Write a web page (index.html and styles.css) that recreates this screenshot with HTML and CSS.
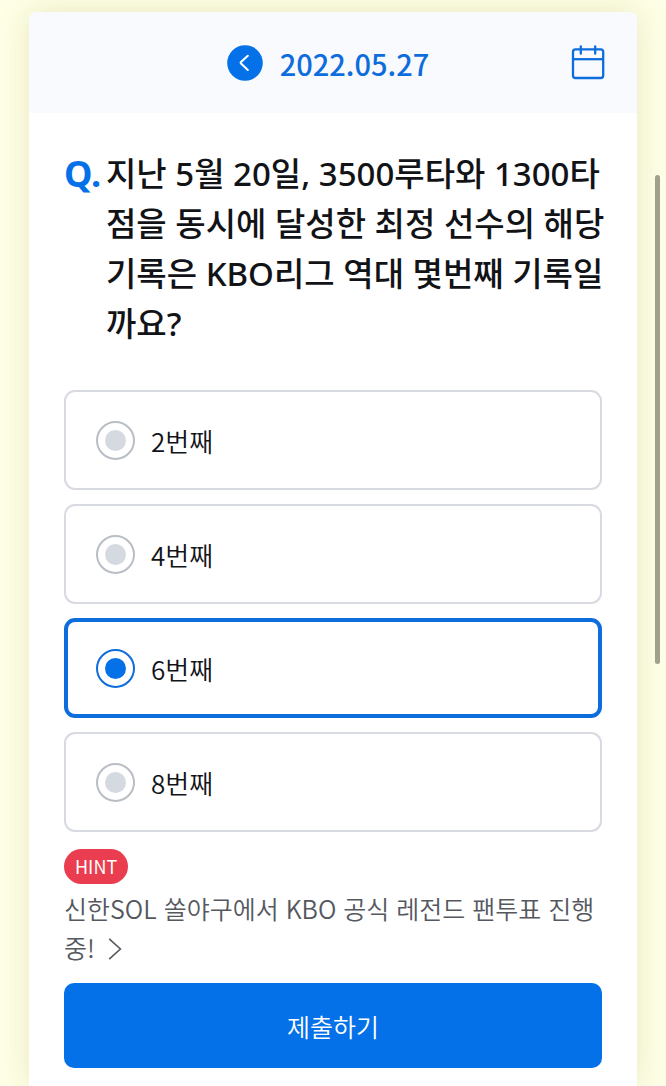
FILE: index.html
```
<!DOCTYPE html>
<html lang="ko">
<head>
<meta charset="utf-8">
<meta name="viewport" content="width=device-width, initial-scale=1">
<title>2022.05.27</title>
<link rel="stylesheet" href="styles.css">
</head>
<body>
<main class="card">
  <header class="card-header">
    <button class="icon-button prev" type="button" aria-label="이전">
      <svg width="36" height="36" viewBox="0 0 36 36" fill="none"><circle cx="18" cy="18" r="17.8" fill="#0471e9"/><path d="M20.8 10.8L14 17Q13.2 17.8 14 18.6L20.8 25" stroke="#fff" stroke-width="2.1" stroke-linecap="round"/></svg>
    </button>
    <h1 class="date">2022.05.27</h1>
    <button class="icon-button calendar" type="button" aria-label="달력">
      <svg width="34" height="36" viewBox="0 0 34 36" fill="none" stroke="#0e6ddd" stroke-width="2.3"><rect x="2" y="4.4" width="30.2" height="28.6" rx="2.5"/><path d="M2 14.2H32.2"/><path d="M9.8 1.5V8.7M24.2 1.5V8.7" stroke-linecap="round"/></svg>
    </button>
  </header>
  <form class="quiz">
    <fieldset class="choices" aria-labelledby="question">
      <h2 class="question"><span class="mark">Q.</span><span id="question">지난 5월 20일, 3500루타와 1300타<br>점을 동시에 달성한 최정 선수의 해당<br>기록은 KBO리그 역대 몇번째 기록일<br>까요?</span></h2>
      <label class="option"><input class="radio" type="radio" name="answer" value="2">2번째</label>
      <label class="option"><input class="radio" type="radio" name="answer" value="4">4번째</label>
      <label class="option"><input class="radio" type="radio" name="answer" value="6" checked>6번째</label>
      <label class="option"><input class="radio" type="radio" name="answer" value="8">8번째</label>
    </fieldset>
    <span class="badge">HINT</span>
    <a class="hint" href="#">신한SOL 쏠야구에서 KBO 공식 레전드 팬투표 진행<br>중!<svg class="chevron" width="14" height="24" viewBox="0 0 14 24" fill="none" stroke="#55585f" stroke-width="1.6"><path d="M1.2 1.8L12.4 12L1.2 22.2"/></svg></a>
    <button class="submit" type="submit">제출하기</button>
  </form>
</main>
<div class="scroll-thumb"></div>
</body>
</html>
```

FILE: styles.css
```
* { box-sizing: border-box; }
body {
  margin: 0;
  padding: 12px 29px 0;
  min-height: 100vh;
  display: flex;
  background: #feffe6;
  color: #111317;
  font-family: "Noto Sans CJK KR", "Noto Sans", sans-serif;
}
.card {
  flex: 1;
  min-width: 0;
  background: #fff;
  border-radius: 8px 8px 0 0;
  box-shadow: 0 0 32px rgba(140, 120, 30, 0.18);
}
.card-header {
  display: grid;
  grid-template-columns: 1fr auto auto 1fr;
  align-items: center;
  column-gap: 17px;
  padding: 0 32px 0 22px;
  height: 101px;
  background: #f9fafe;
  border-radius: 8px 8px 0 0;
}
.icon-button {
  display: flex;
  padding: 0;
  border: 0;
  background: none;
}
.prev { grid-column: 2; }
.calendar { justify-self: end; }
.date {
  margin: 0;
  font-size: 29px;
  font-weight: 500;
  line-height: 40px;
  color: #0e6ddd;
}
.quiz {
  display: flex;
  flex-direction: column;
  padding: 36px 35px 18px;
}
.choices {
  display: flex;
  flex-direction: column;
  gap: 14px;
  min-width: 0;
  margin: 0;
  padding: 0;
  border: 0;
}
.question {
  display: grid;
  grid-template-columns: 36px 1fr;
  column-gap: 6px;
  margin: 0 0 27px;
  font-family: "Noto Sans", "Noto Sans CJK KR", sans-serif;
  font-size: 33px;
  font-weight: 500;
  line-height: 50px;
  white-space: nowrap;
}
.mark {
  font-size: 36px;
  font-weight: 700;
  color: #0471e9;
}
.option {
  display: flex;
  align-items: center;
  gap: 16px;
  height: 100px;
  padding: 0 30px;
  border: 2px solid #d8dae1;
  border-radius: 11px;
  font-size: 26px;
  font-weight: 350;
}
.option:has(:checked) {
  padding: 0 28px;
  border: 4px solid #0e6ddd;
}
.radio {
  appearance: none;
  width: 39px;
  height: 39px;
  margin: 0;
  padding: 7px;
  border: 2px solid #b9bec5;
  border-radius: 50%;
  background: #d5d9e0 content-box;
  background-clip: content-box;
}
.radio:checked {
  border-color: #0e6ddd;
  background-color: #0471e9;
}
.badge {
  align-self: flex-start;
  margin-top: 17px;
  padding: 0 11px;
  border-radius: 18px;
  background: #ea3d50;
  color: #fff;
  font-size: 18px;
  line-height: 35px;
}
.hint {
  margin-top: 5px;
  color: #55585f;
  font-size: 25px;
  font-weight: 350;
  line-height: 39px;
  text-decoration: none;
  white-space: nowrap;
}
.chevron {
  margin-left: 13px;
  vertical-align: -3px;
}
.submit {
  height: 85px;
  margin-top: 16px;
  border: 0;
  border-radius: 10px;
  background: #0471e9;
  color: #fff;
  font: inherit;
  font-size: 25px;
  font-weight: 350;
}
.scroll-thumb {
  position: fixed;
  top: 175px;
  right: 6px;
  width: 5px;
  height: 45vh;
  border-radius: 3px;
  background: #a0a18d;
}
```
